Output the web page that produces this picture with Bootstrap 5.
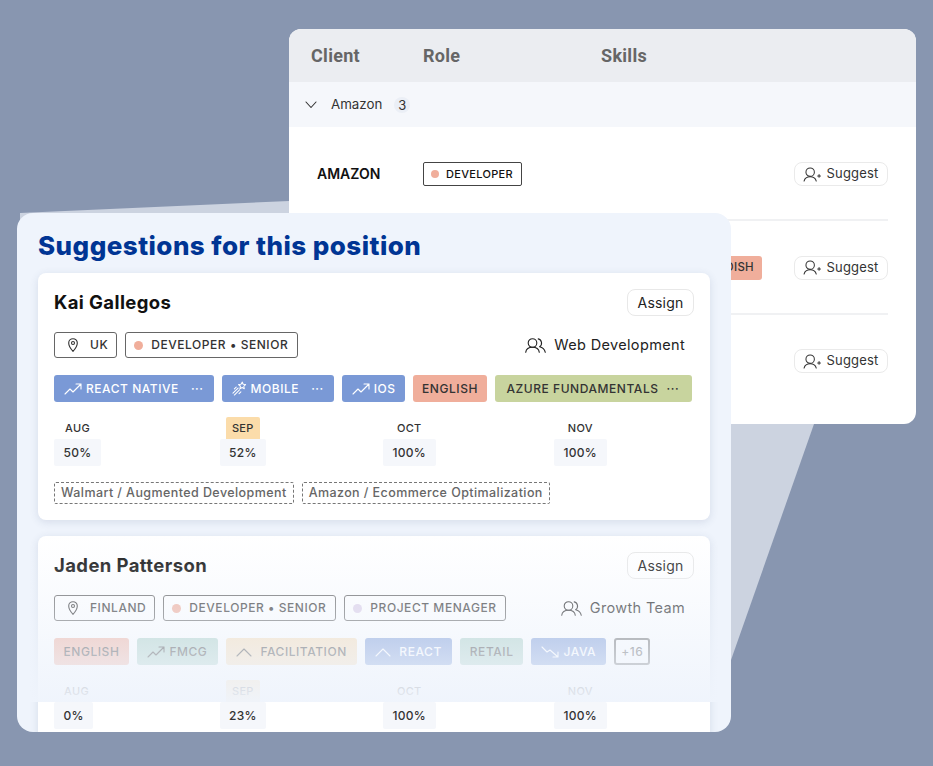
<!DOCTYPE html>
<html lang="en">

<head>
    <meta charset="UTF-8">
    <meta name="viewport" content="width=device-width, initial-scale=1.0">
    <title>Suggestions</title>
    <link href="https://cdn.jsdelivr.net/npm/bootstrap@5.3.0/dist/css/bootstrap.min.css" rel="stylesheet">
    <style>
        body {
            background-color: #8896b0;
            font-family: 'Inter', sans-serif;
            color: #222;
            margin: 0;
            overflow: hidden;
        }

        svg {
            flex: none;
            fill: none;
            stroke: currentColor;
            stroke-width: 1.1;
            stroke-linecap: round;
            stroke-linejoin: round;
        }

        .stage {
            position: relative;
            width: 933px;
            height: 766px;
        }

        .wedge {
            position: absolute;
            left: 0;
            top: 0;
        }

        .back-window {
            position: absolute;
            left: 289px;
            top: 29px;
            width: 627px;
            height: 395px;
            background: #fff;
            border-radius: 12px;
            overflow: hidden;
        }

        .back-head {
            height: 53px;
            background: #ebedf1;
            font-family: 'Roboto', sans-serif;
            font-weight: 700;
            font-size: 18px;
            letter-spacing: .3px;
            color: #666;
            padding-left: 22px;
        }

        .col-client { width: 112px; }
        .col-role { width: 178px; }

        .back-group {
            height: 45px;
            background: #f5f7fb;
            padding-left: 16px;
            font-size: 13.300px;
            color: #333;
        }

        .group-name { margin-left: 14px; }

        .count-dot {
            background: #ebeff6;
            border-radius: 50%;
            width: 16px;
            height: 16px;
            margin-left: 12px;
            font-size: 13px;
            text-align: center;
            line-height: 16px;
        }

        .back-row {
            height: 94px;
            margin: 0 28px;
            padding-top: 1px;
            border-bottom: 2px solid #f0f1f3;
        }

        .back-row.first { padding-top: 2px; }
        .back-row.last { height: 92px; padding-top: 0; border-bottom: 0; }

        .client-name {
            width: 106px;
            margin-bottom: 2px;
            font-size: 14px;
            font-weight: 600;
            color: #111;
        }

        .role-chip {
            border: 1px solid #444;
            border-radius: 2px;
            height: 24px;
            padding: 0 8px 0 7px;
            font-size: 11px;
            font-weight: 500;
            letter-spacing: .3px;
            color: #111;
        }

        .dot {
            width: 9px;
            height: 9px;
            border-radius: 50%;
            background: #f0ae9b;
            flex: none;
        }

        .dot-small { width: 8px; height: 8px; margin-right: 7px; }
        .dot-purple { background: #dccfe8; }

        .suggest-btn {
            height: 24px;
            width: 94px;
            padding: 0;
            border: 1px solid #eaeaea;
            border-radius: 8px;
            font-size: 13px;
            letter-spacing: .2px;
            color: #333;
            background: #fff;
        }

        .suggest-gap { margin-left: 32px; }

        .front-window {
            position: absolute;
            left: 17px;
            top: 213px;
            width: 714px;
            height: 519px;
            background: #eff4fc;
            border-radius: 16px;
            padding: 14px 21px 0;
            overflow: hidden;
        }

        .front-title {
            font-family: 'Inter', sans-serif;
            font-weight: 800;
            font-size: 26px;
            line-height: 38px;
            letter-spacing: .45px;
            color: #003594;
            margin: 0 0 8px;
        }

        .person-card {
            height: 247px;
            margin-bottom: 16px;
            padding: 16px 16px 0;
            border: 0;
            border-radius: 8px;
            box-shadow: 0 2px 8px rgba(60, 80, 120, .14);
        }

        .person-name {
            font-family: 'Inter', sans-serif;
            font-weight: 700;
            font-size: 18.500px;
            letter-spacing: .4px;
            color: #111;
            margin: 0;
        }

        .assign-btn {
            height: 27px;
            width: 67px;
            padding: 0;
            border: 1px solid #e8e8e8;
            border-radius: 8px;
            font-size: 14px;
            color: #222;
            background: #fff;
            letter-spacing: .2px;
        }

        .head-line { height: 27px; margin-bottom: 16px; }

        .pill-line { height: 26px; margin-bottom: 17px; padding-right: 9px; }

        .info-pill {
            height: 26px;
            border: 1px solid #666;
            border-radius: 3px;
            font-size: 12px;
            font-weight: 500;
            letter-spacing: .55px;
            color: #333;
            padding: 0 8px;
            white-space: nowrap;
        }

        .info-dotted { padding-right: 9px; }

        .pin-mark { margin: 0 12px 0 5px; }

        .team-name {
            font-size: 14.500px;
            letter-spacing: .35px;
            color: #222;
        }

        .skill-line { height: 27px; margin-bottom: 15px; }

        .skill-chip {
            height: 27px;
            border-radius: 3px;
            padding: 0 10px;
            font-size: 12px;
            font-weight: 500;
            letter-spacing: .55px;
            color: #333;
            white-space: nowrap;
            flex: none;
        }

        .chip-blue { background: #7a99d6; color: #fff; }
        .chip-red { background: #f0ae9b; padding: 0 9.500px; }
        .chip-green { background: #c8d49e; padding: 0 13px 0 11px; }
        .chip-teal { background: #a9cfc4; }
        .chip-sand { background: #f8dcb4; }
        .chip-more { background: #fff; border: 2px solid #666; color: #555; padding: 0 5px; }
        .chip-short { height: 24px; padding: 0 8px; font-size: 11.500px; letter-spacing: .3px; }
        .chip-tight { padding-right: 9px; }
        .chip-wide { padding: 0 10.500px; }
        .more-dots { margin-left: 8px; }

        .month-slot { flex: none; display: flex; }
        .month-slot:nth-child(1) { width: 165.500px; }
        .month-slot:nth-child(2) { width: 163.500px; }
        .month-slot:nth-child(3) { width: 171px; }

        .month-stack { min-width: 45px; }

        .month-label {
            height: 22px;
            line-height: 22px;
            padding: 0 6px;
            font-size: 11px;
            font-weight: 500;
            letter-spacing: .3px;
            color: #333;
            border-radius: 2px 2px 0 0;
        }

        .month-hot { background: #fbdcaa; }

        .month-value {
            height: 27px;
            line-height: 27px;
            padding: 0 9.500px;
            font-size: 12px;
            font-weight: 500;
            letter-spacing: .3px;
            color: #333;
            background: #f5f7fb;
            border-radius: 2px;
        }

        .project-chip {
            height: 22px;
            border: 1px dashed #777;
            border-radius: 2px;
            padding: 0 6px;
            font-size: 12.500px;
            font-weight: 500;
            letter-spacing: .42px;
            color: #666;
        }

        .project-line { margin-top: 16px; }

        .fade-over {
            position: absolute;
            left: 0;
            top: 323px;
            width: 100%;
            height: 166px;
            background: linear-gradient(to bottom, rgba(239, 244, 252, 0), rgba(239, 244, 252, .97));
        }
    </style>
</head>

<body>
    <svg width="0" height="0" class="position-absolute">
        <symbol id="trend-up" viewBox="0 0 18 12"><path d="M1 11l5-5 3 3 8-8M12 1h5v5" /></symbol>
        <symbol id="trend-down" viewBox="0 0 18 12"><path d="M1 1l5 5 3-2 8 7M12 11h5V6" /></symbol>
        <symbol id="caret-up" viewBox="0 0 16 10"><path d="M1 9l7-7 7 7" /></symbol>
        <symbol id="pin" viewBox="0 0 10 14"><path d="M5 13.300S.700 8.700.700 5a4.300 4.300 0 0 1 8.600 0C9.300 8.700 5 13.300 5 13.300z" /><circle cx="5" cy="5" r="1.500" /></symbol>
        <symbol id="people" viewBox="0 0 21 15"><circle cx="7.500" cy="5" r="4.300" /><path d="M.7 14.300c.5-3.400 3-5 6.800-5s6.300 1.600 6.800 5M13.200 .9a4.300 4.300 0 0 1 1.400 7.800c2.800.6 5 2.600 5.700 5.600" /></symbol>
        <symbol id="user-plus" viewBox="0 0 20 16"><circle cx="7.500" cy="5.500" r="4.500" /><path d="M1 15c.7-2.800 3-4.500 6.500-4.500s5.800 1.700 6.500 4.500M15.500 9.500h3M17 8v3" /></symbol>
        <symbol id="rocket" viewBox="0 0 16 16"><path d="M11 1.200l.9 2.300 2.600.3-1.900 1.800.5 2.600-2.300-1.300-2.300 1.300.5-2.600L7 3.800l2.600-.3zM6.500 7.500L1 13M8 9.500L2.500 15M4.500 6.500L2.500 8.500M9.500 11.500L7.500 13.500" /></symbol>
    </svg>

    <div class="stage">
        <svg class="wedge" width="933" height="766"><polygon points="20,213 289,201 814,424 731,660 20,660" fill="#ccd3e0" stroke="none" /></svg>

        <div class="back-window">
            <div class="back-head d-flex align-items-center">
                <div class="col-client">Client</div>
                <div class="col-role">Role</div>
                <div>Skills</div>
            </div>
            <div class="back-group d-flex align-items-center">
                <svg width="12" height="8" viewBox="0 0 12 8"><path d="M1 1l5 5.500L11 1" /></svg>
                <span class="group-name">Amazon</span>
                <span class="count-dot">3</span>
            </div>
            <div class="back-row first d-flex align-items-center">
                <div class="client-name">AMAZON</div>
                <div class="role-chip d-flex align-items-center"><span class="dot dot-small"></span>DEVELOPER</div>
                <button class="btn suggest-btn ms-auto d-flex align-items-center justify-content-center gap-1"><svg width="19" height="15"><use href="#user-plus" /></svg>Suggest</button>
            </div>
            <div class="back-row d-flex align-items-center">
                <div class="skill-chip chip-red chip-short d-flex align-items-center ms-auto">SWEDISH</div>
                <button class="btn suggest-btn suggest-gap d-flex align-items-center justify-content-center gap-1"><svg width="19" height="15"><use href="#user-plus" /></svg>Suggest</button>
            </div>
            <div class="back-row last d-flex align-items-center">
                <button class="btn suggest-btn ms-auto d-flex align-items-center justify-content-center gap-1"><svg width="19" height="15"><use href="#user-plus" /></svg>Suggest</button>
            </div>
        </div>

        <div class="front-window">
            <h1 class="front-title">Suggestions for this position</h1>

            <div class="card person-card">
                <div class="head-line d-flex align-items-center justify-content-between">
                    <h2 class="person-name">Kai Gallegos</h2>
                    <button class="btn assign-btn">Assign</button>
                </div>
                <div class="pill-line d-flex align-items-center gap-2">
                    <div class="info-pill d-flex align-items-center"><svg class="pin-mark" width="10" height="14"><use href="#pin" /></svg>UK</div>
                    <div class="info-pill info-dotted d-flex align-items-center gap-2"><span class="dot"></span>DEVELOPER • SENIOR</div>
                    <div class="team-name ms-auto d-flex align-items-center gap-2"><svg width="21" height="15"><use href="#people" /></svg>Web Development</div>
                </div>
                <div class="skill-line d-flex gap-2">
                    <div class="skill-chip chip-blue d-flex align-items-center gap-1"><svg width="18" height="12"><use href="#trend-up" /></svg>REACT NATIVE<span class="more-dots">···</span></div>
                    <div class="skill-chip chip-blue d-flex align-items-center gap-1"><svg width="15" height="15"><use href="#rocket" /></svg>MOBILE<span class="more-dots">···</span></div>
                    <div class="skill-chip chip-blue chip-tight d-flex align-items-center gap-1"><svg width="18" height="12"><use href="#trend-up" /></svg>IOS</div>
                    <div class="skill-chip chip-red d-flex align-items-center">ENGLISH</div>
                    <div class="skill-chip chip-green d-flex align-items-center">AZURE FUNDAMENTALS<span class="more-dots">···</span></div>
                </div>
                <div class="d-flex">
                    <div class="month-slot"><div class="month-stack d-flex flex-column align-items-center"><div class="month-label">AUG</div><div class="month-value">50%</div></div></div>
                    <div class="month-slot"><div class="month-stack d-flex flex-column align-items-center"><div class="month-label month-hot">SEP</div><div class="month-value">52%</div></div></div>
                    <div class="month-slot"><div class="month-stack d-flex flex-column align-items-center"><div class="month-label">OCT</div><div class="month-value">100%</div></div></div>
                    <div class="month-slot"><div class="month-stack d-flex flex-column align-items-center"><div class="month-label">NOV</div><div class="month-value">100%</div></div></div>
                </div>
                <div class="project-line d-flex gap-2">
                    <div class="project-chip d-flex align-items-center">Walmart / Augmented Development</div>
                    <div class="project-chip d-flex align-items-center">Amazon / Ecommerce Optimalization</div>
                </div>
            </div>

            <div class="card person-card">
                <div class="head-line d-flex align-items-center justify-content-between">
                    <h2 class="person-name">Jaden Patterson</h2>
                    <button class="btn assign-btn">Assign</button>
                </div>
                <div class="pill-line d-flex align-items-center gap-2">
                    <div class="info-pill d-flex align-items-center"><svg class="pin-mark" width="10" height="14"><use href="#pin" /></svg>FINLAND</div>
                    <div class="info-pill info-dotted d-flex align-items-center gap-2"><span class="dot"></span>DEVELOPER • SENIOR</div>
                    <div class="info-pill d-flex align-items-center gap-2"><span class="dot dot-purple"></span>PROJECT MENAGER</div>
                    <div class="team-name ms-auto d-flex align-items-center gap-2"><svg width="21" height="15"><use href="#people" /></svg>Growth Team</div>
                </div>
                <div class="skill-line d-flex gap-2">
                    <div class="skill-chip chip-red d-flex align-items-center">ENGLISH</div>
                    <div class="skill-chip chip-teal chip-wide d-flex align-items-center gap-1"><svg width="18" height="12"><use href="#trend-up" /></svg>FMCG</div>
                    <div class="skill-chip chip-sand chip-wide d-flex align-items-center gap-2"><svg width="16" height="10"><use href="#caret-up" /></svg>FACILITATION</div>
                    <div class="skill-chip chip-blue d-flex align-items-center gap-2"><svg width="16" height="10"><use href="#caret-up" /></svg>REACT</div>
                    <div class="skill-chip chip-teal d-flex align-items-center">RETAIL</div>
                    <div class="skill-chip chip-blue d-flex align-items-center gap-1"><svg width="18" height="12"><use href="#trend-down" /></svg>JAVA</div>
                    <div class="skill-chip chip-more d-flex align-items-center">+16</div>
                </div>
                <div class="d-flex">
                    <div class="month-slot"><div class="month-stack d-flex flex-column align-items-center"><div class="month-label">AUG</div><div class="month-value align-self-start">0%</div></div></div>
                    <div class="month-slot"><div class="month-stack d-flex flex-column align-items-center"><div class="month-label month-hot">SEP</div><div class="month-value">23%</div></div></div>
                    <div class="month-slot"><div class="month-stack d-flex flex-column align-items-center"><div class="month-label">OCT</div><div class="month-value">100%</div></div></div>
                    <div class="month-slot"><div class="month-stack d-flex flex-column align-items-center"><div class="month-label">NOV</div><div class="month-value">100%</div></div></div>
                </div>
            </div>
            <div class="fade-over"></div>
        </div>
    </div>
</body>

</html>
